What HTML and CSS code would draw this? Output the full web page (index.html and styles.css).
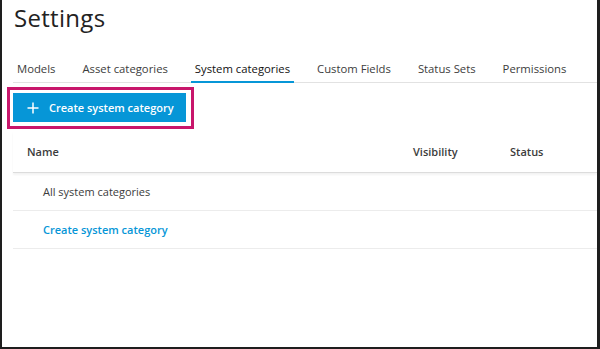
FILE: index.html
```html
<!DOCTYPE html>
<html lang="en">
<head>
    <meta charset="UTF-8">
    <title>Settings</title>
    <link rel="stylesheet" href="styles.css">
</head>
<body>
    <div class="frame">
        <h1 class="title">Settings</h1>
        <div class="tabs">
            <a class="tab">Models</a>
            <a class="tab">Asset categories</a>
            <a class="tab active">System categories</a>
            <a class="tab">Custom Fields</a>
            <a class="tab">Status Sets</a>
            <a class="tab">Permissions</a>
        </div>
        <div class="toolbar">
            <div class="highlight">
                <button class="create-btn">
                    <svg width="12" height="12" viewBox="0 0 12 12">
                        <path d="M6 0.5V11.5M0.5 6H11.5" stroke="#fff" stroke-width="1.5" fill="none"/>
                    </svg>
                    <span>Create system category</span>
                </button>
            </div>
        </div>
        <div class="table">
            <div class="row head">
                <div class="cell name">Name</div>
                <div class="cell">Visibility</div>
                <div class="cell">Status</div>
            </div>
            <div class="row">
                <div class="cell name item">All system categories</div>
                <div class="cell"></div>
                <div class="cell"></div>
            </div>
            <div class="row">
                <div class="cell name item"><a class="link">Create system category</a></div>
                <div class="cell"></div>
                <div class="cell"></div>
            </div>
        </div>
    </div>
</body>
</html>
```

FILE: styles.css
```css
* {
    margin: 0;
    padding: 0;
    box-sizing: border-box;
}
body {
    font-family: 'Open Sans', sans-serif;
    background: #fff;
    color: #3c3c3c;
}
.frame {
    width: 600px;
    height: 349px;
    border-left: 2px solid #1e1e1e;
    border-right: 3px solid #1e1e1e;
    border-bottom: 2px solid #1e1e1e;
    padding-left: 11px;
    overflow: hidden;
}
.title {
    font-size: 24px;
    font-weight: 400;
    line-height: 30px;
    padding: 3px 0 0 1px;
    letter-spacing: 0.3px;
    color: #222;
}
.tabs {
    display: flex;
    margin-top: 23px;
    border-bottom: 1px solid #e2e2e2;
    white-space: nowrap;
}
.tab {
    font-size: 11.3px;
    line-height: 16px;
    padding: 5px 4px 4px;
    margin-right: 19px;
    color: #3c3c3c;
    border-bottom: 2px solid transparent;
    margin-bottom: -1px;
}
.tab.active {
    color: #111;
    border-bottom-color: #0696d7;
}
.toolbar {
    padding: 4px 0 1px 0;
    margin-left: -6px;
}
.highlight {
    display: inline-block;
    border: 3px solid #c8166b;
    padding: 3px 5px 4px 3px;
}
.create-btn {
    display: flex;
    align-items: center;
    gap: 10px;
    height: 29px;
    padding: 0 12px 0 14px;
    background: #0696d7;
    color: #fff;
    border: none;
    font-family: 'Open Sans', sans-serif;
    font-size: 11px;
    font-weight: 600;
}
.table {
    margin-top: 1px;
}
.row {
    display: grid;
    grid-template-columns: 400px 97px 1fr;
    height: 38px;
    align-items: center;
    border-bottom: 1px solid #ececec;
}
.row.head {
    height: 42px;
    border-bottom: 1px solid #dcdcdc;
    box-shadow: 0 2px 2px rgba(0, 0, 0, 0.05);
}
.cell {
    font-size: 11px;
    font-weight: 600;
    color: #3c3c3c;
}
.cell.name {
    padding-left: 14px;
}
.cell.item {
    padding-left: 30px;
    font-weight: 400;
}
.link {
    color: #0696d7;
    font-weight: 600;
}
```
